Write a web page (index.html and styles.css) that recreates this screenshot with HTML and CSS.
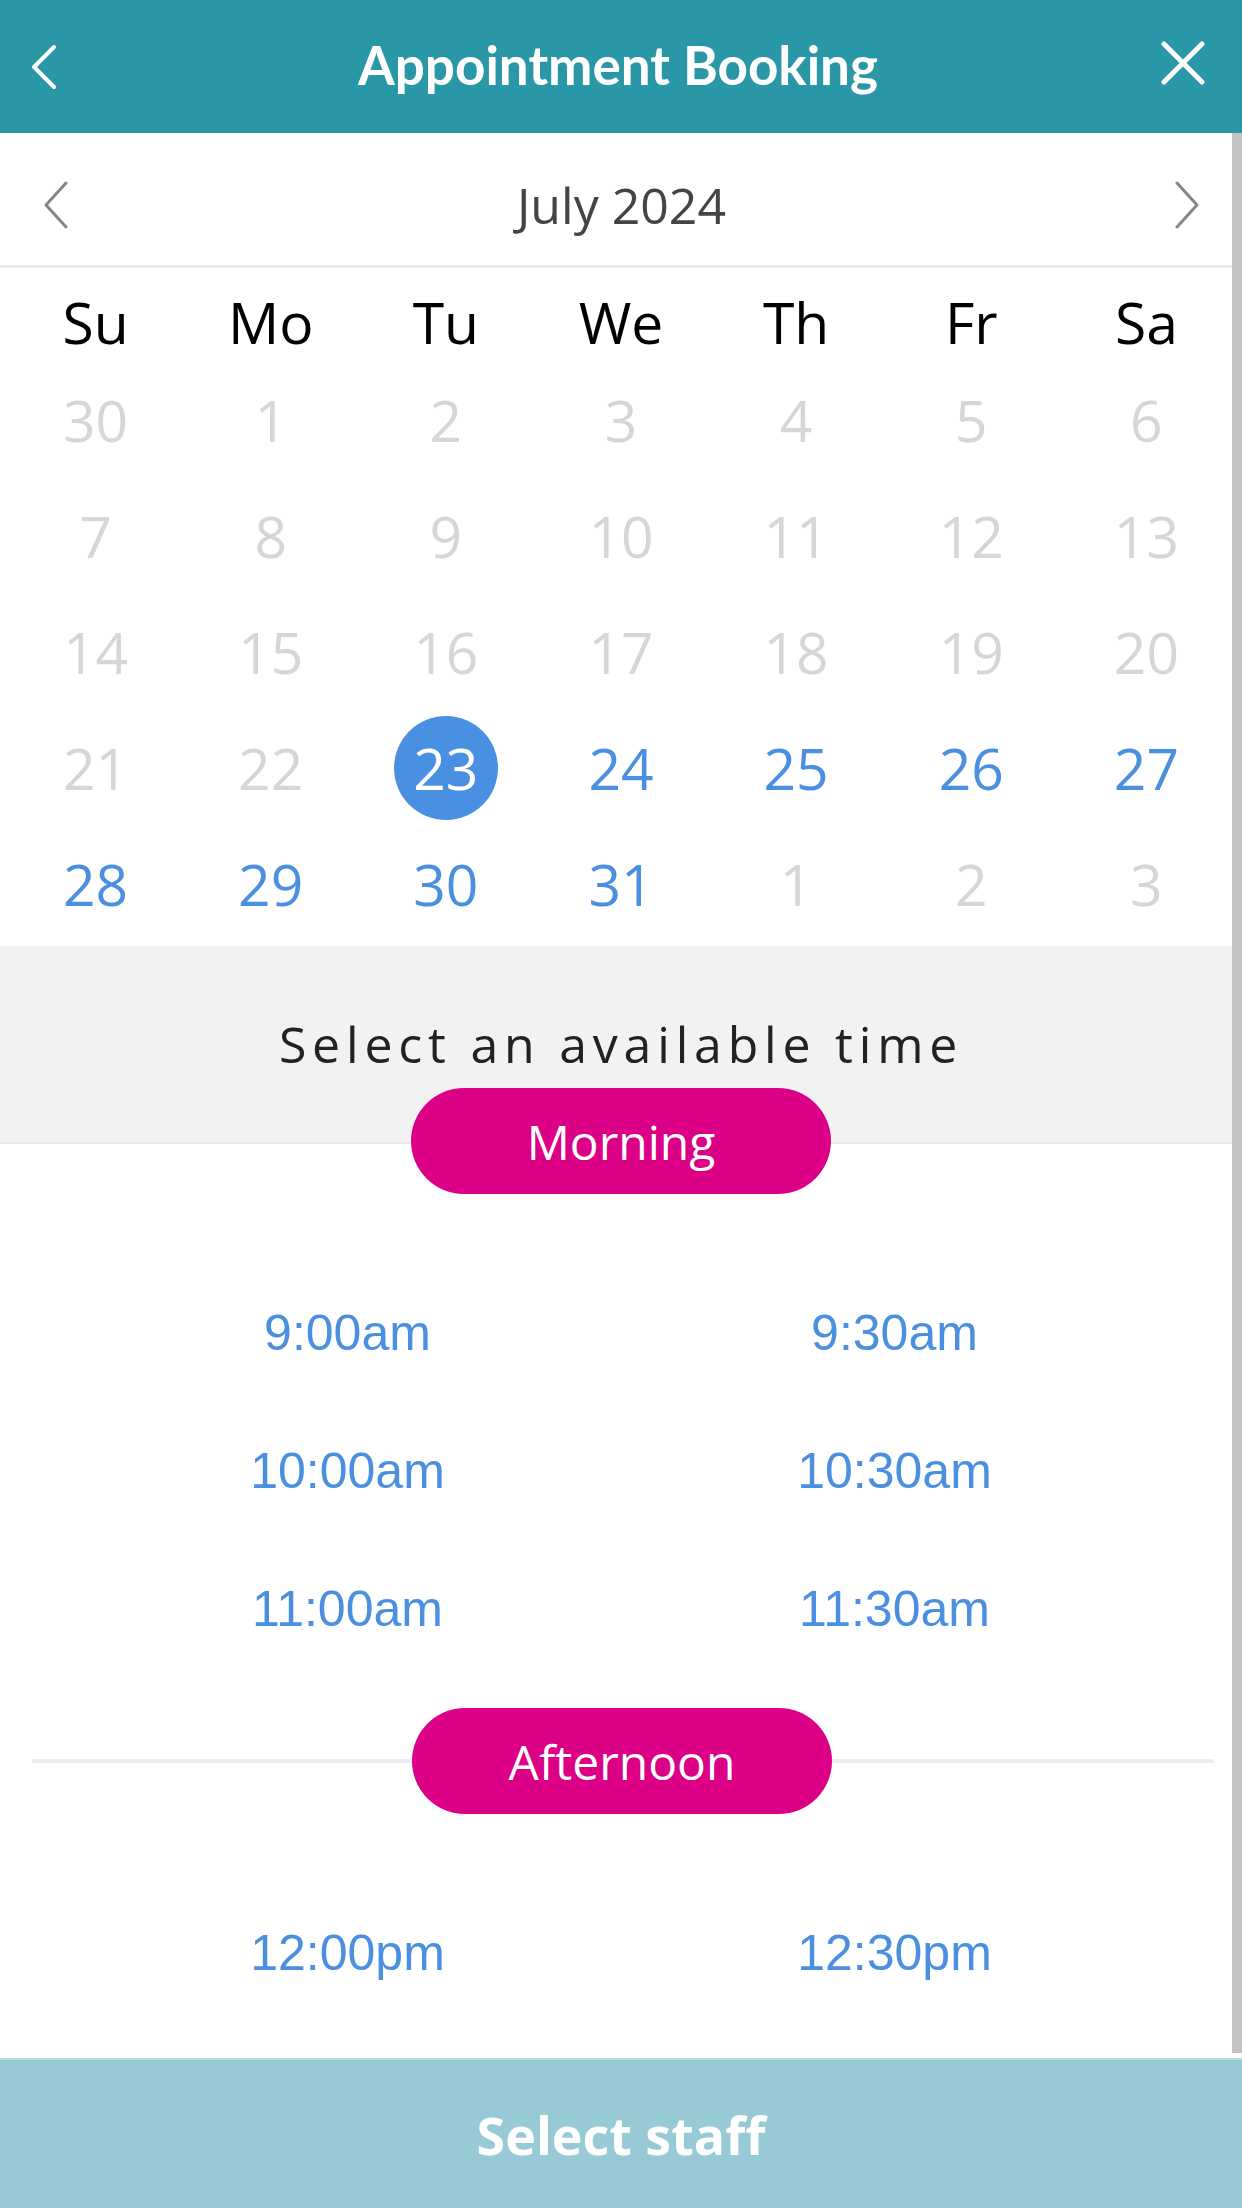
FILE: index.html
```html
<!DOCTYPE html>
<html>
  <head>
    <title>Appointment Booking</title>
    <link rel="stylesheet" href="styles.css">
  </head>
  <body>
    <header class="topbar">
      <button class="icon-btn back" aria-label="Back">
        <svg width="28" height="46" viewBox="0 0 28 46">
          <path d="M24 3 L4 23 L24 43" />
        </svg>
      </button>
      <h1>Appointment Booking</h1>
      <button class="icon-btn close" aria-label="Close">
        <svg width="46" height="44" viewBox="0 0 46 44">
          <path d="M4 3 L42 41 M42 3 L4 41" />
        </svg>
      </button>
    </header>

    <main class="content">
      <div class="scroll-thumb"></div>

      <!-- Calendar -->
      <section class="calendar">
        <div class="month-nav">
          <svg class="chev" width="26" height="48" viewBox="0 0 26 48">
            <path d="M23 2 L3 24 L23 46" />
          </svg>
          <span class="month-label">July 2024</span>
          <svg class="chev" width="26" height="48" viewBox="0 0 26 48">
            <path d="M3 2 L23 24 L3 46" />
          </svg>
        </div>

        <div class="days-grid">
          <div class="weekday">Su</div>
          <div class="weekday">Mo</div>
          <div class="weekday">Tu</div>
          <div class="weekday">We</div>
          <div class="weekday">Th</div>
          <div class="weekday">Fr</div>
          <div class="weekday">Sa</div>

          <div class="day off">30</div>
          <div class="day off">1</div>
          <div class="day off">2</div>
          <div class="day off">3</div>
          <div class="day off">4</div>
          <div class="day off">5</div>
          <div class="day off">6</div>

          <div class="day off">7</div>
          <div class="day off">8</div>
          <div class="day off">9</div>
          <div class="day off">10</div>
          <div class="day off">11</div>
          <div class="day off">12</div>
          <div class="day off">13</div>

          <div class="day off">14</div>
          <div class="day off">15</div>
          <div class="day off">16</div>
          <div class="day off">17</div>
          <div class="day off">18</div>
          <div class="day off">19</div>
          <div class="day off">20</div>

          <div class="day off">21</div>
          <div class="day off">22</div>
          <div class="day"><span class="selected">23</span></div>
          <div class="day">24</div>
          <div class="day">25</div>
          <div class="day">26</div>
          <div class="day">27</div>

          <div class="day">28</div>
          <div class="day">29</div>
          <div class="day">30</div>
          <div class="day">31</div>
          <div class="day off">1</div>
          <div class="day off">2</div>
          <div class="day off">3</div>
        </div>
      </section>

      <!-- Time slots -->
      <section class="slots">
        <div class="slots-intro">
          <h2>Select an available time</h2>
        </div>

        <div class="period-head first">
          <span class="pill">Morning</span>
        </div>
        <div class="slot-grid">
          <a class="slot">9:00am</a>
          <a class="slot">9:30am</a>
          <a class="slot">10:00am</a>
          <a class="slot">10:30am</a>
          <a class="slot">11:00am</a>
          <a class="slot">11:30am</a>
        </div>

        <div class="period-head divider">
          <span class="pill">Afternoon</span>
        </div>
        <div class="slot-grid">
          <a class="slot">12:00pm</a>
          <a class="slot">12:30pm</a>
        </div>
      </section>
    </main>

    <footer class="cta">Select staff</footer>
  </body>
</html>
```

FILE: styles.css
```css
:root {
  --teal: #2a97a6;
  --teal-light: #97cad5;
  --blue: #4a8fe0;
  --muted: #d3d7da;
  --pink: #dc0087;
  --band: #f2f2f3;
}

* {
  box-sizing: border-box;
}

html,
body {
  margin: 0;
  height: 100%;
}

body {
  display: flex;
  flex-direction: column;
  height: 2208px;
  font-family: "Open Sans", "Liberation Sans", sans-serif;
  background: #fff;
  color: #222;
}

/* Top bar */
.topbar {
  flex: none;
  height: 133px;
  display: grid;
  grid-template-columns: 1fr auto 1fr;
  align-items: center;
  padding: 0 36px 0 30px;
  background: var(--teal);
  color: white;
}

.topbar h1 {
  margin: 0 0 4px 0;
  font-family: "Lato", "Open Sans", sans-serif;
  font-weight: 700;
  font-size: 53px;
}

.icon-btn {
  display: flex;
  padding: 0;
  border: none;
  background: none;
  cursor: pointer;
}

.icon-btn svg path {
  fill: none;
  stroke: white;
  stroke-linecap: round;
  stroke-linejoin: round;
}

.back {
  justify-self: start;
}

.back svg path {
  stroke-width: 4;
}

.close {
  justify-self: end;
  margin-bottom: 7px;
}

.close svg path {
  stroke-width: 5;
}

/* Scrollable area */
.content {
  flex: 1;
  position: relative;
  overflow: hidden;
}

.scroll-thumb {
  position: absolute;
  top: 0;
  right: 0;
  bottom: 5px;
  width: 10px;
  background: #c3c2c4;
}

/* Calendar */
.month-nav {
  height: 135px;
  display: flex;
  align-items: center;
  justify-content: space-between;
  padding: 12px 42px 0 43px;
  border-bottom: 3px solid #eaebed;
}

.month-label {
  font-size: 50px;
  color: #444;
}

.chev path {
  fill: none;
  stroke: #80878d;
  stroke-width: 3;
  stroke-linecap: round;
  stroke-linejoin: round;
}

.days-grid {
  display: grid;
  grid-template-columns: repeat(7, 1fr);
  grid-template-rows: 80px repeat(5, 116px);
  padding: 14px 8px 4px;
  font-size: 57px;
}

.weekday {
  display: flex;
  align-items: center;
  justify-content: center;
  color: #000;
}

.day {
  display: flex;
  align-items: center;
  justify-content: center;
  color: var(--blue);
}

.day.off {
  color: var(--muted);
}

.selected {
  width: 104px;
  height: 104px;
  border-radius: 50%;
  display: flex;
  align-items: center;
  justify-content: center;
  background: #4a90e2;
  color: white;
}

/* Time slots */
.slots-intro {
  background: var(--band);
  padding: 64px 0 10px;
  text-align: center;
}

.slots-intro h2 {
  margin: 0;
  font-weight: 400;
  font-size: 50px;
  letter-spacing: 5.8px;
  color: #222;
}

.period-head {
  display: flex;
  justify-content: center;
}

.period-head.first {
  background: linear-gradient(
    var(--band) 0 54px,
    #e6e7e9 54px 56px,
    #fff 56px
  );
}

.period-head.divider {
  margin: 30px 28px 0 32px;
  background: linear-gradient(#eceef0, #eceef0) center / 100% 4px no-repeat;
}

.pill {
  width: 420px;
  height: 106px;
  border-radius: 53px;
  display: flex;
  align-items: center;
  justify-content: center;
  background: var(--pink);
  color: white;
  font-size: 48px;
}

.period-head.divider .pill {
  margin-left: -2px;
}

.slot-grid {
  display: grid;
  grid-template-columns: 1fr 1fr;
  grid-auto-rows: 138px;
  padding: 70px 74px 0;
}

.slot {
  display: flex;
  align-items: center;
  justify-content: center;
  font-family: "Liberation Sans", Arial, sans-serif;
  font-size: 50px;
  color: var(--blue);
  cursor: pointer;
}

/* Bottom action */
.cta {
  flex: none;
  height: 150px;
  display: flex;
  align-items: center;
  justify-content: center;
  border-top: 2px solid #b6dbe2;
  background: var(--teal-light);
  color: white;
  font-weight: 700;
  font-size: 52px;
}
```
